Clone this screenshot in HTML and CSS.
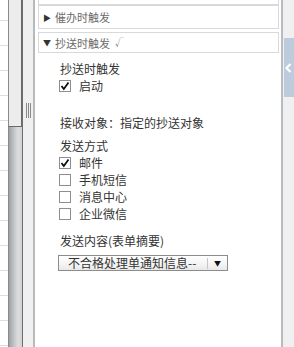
FILE: index.html
```html
<!DOCTYPE html>
<html>
<head>
<meta charset="utf-8">
<link rel="stylesheet" href="styles.css">
</head>
<body>
<div class="frame">
  <div class="list-strip"></div>
  <div class="vscroll">
    <div class="thumb"></div>
    <div class="track"></div>
  </div>
  <div class="splitter">
    <div class="grip"><span></span><span></span><span></span></div>
  </div>
  <div class="panel">
    <div class="sec sec-cut"></div>
    <div class="sec sec-b"><span class="tri">▶</span>催办时触发</div>
    <div class="sec sec-c"><span class="tri">▼</span>抄送时触发<span class="tick">√</span></div>
    <div class="content">
      <div class="row title">抄送时触发</div>
      <div class="row chk"><span class="box checked"><svg viewBox="0 0 12 12" width="12" height="12"><path d="M2.5 6 L4.8 9 L9.5 2.5" fill="none" stroke="#111" stroke-width="1.8"/></svg></span>启动</div>
      <div class="row recv">接收对象：指定的抄送对象</div>
      <div class="row title2">发送方式</div>
      <div class="row chk"><span class="box checked"><svg viewBox="0 0 12 12" width="12" height="12"><path d="M2.5 6 L4.8 9 L9.5 2.5" fill="none" stroke="#111" stroke-width="1.8"/></svg></span>邮件</div>
      <div class="row chk"><span class="box"></span>手机短信</div>
      <div class="row chk"><span class="box"></span>消息中心</div>
      <div class="row chk"><span class="box"></span>企业微信</div>
      <div class="row title3">发送内容(表单摘要)</div>
      <div class="select"><span class="sel-text">不合格处理单通知信息--</span><span class="sel-sep"></span><span class="sel-arrow">▼</span></div>
    </div>
  </div>
  <div class="rborder"></div>
  <div class="rstrip">
    <div class="tab"><svg viewBox="0 0 9 10" width="9" height="10"><path d="M6.5 1 L2.5 5 L6.5 9" fill="none" stroke="#fff" stroke-width="2.2"/></svg></div>
  </div>
</div>
</body>
</html>
```
FILE: styles.css
```css
html, body {
  margin: 0;
  padding: 0;
  background: #fff;
}
body {
  font-family: "Noto Sans CJK SC", "Noto Sans", sans-serif;
  color: #333;
  font-size: 12px;
}
.frame {
  display: flex;
  width: 294px;
  height: 347px;
  overflow: hidden;
}
.list-strip {
  width: 8px;
  flex: none;
  background: repeating-linear-gradient(to bottom, #fff 0 20px, #dedede 20px 21px, #fff 21px 25px);
}
.vscroll {
  width: 14px;
  flex: none;
  display: flex;
  flex-direction: column;
  border-right: 1px solid #6e6e6e;
}
.thumb {
  background: #ececec;
  border-left: 1px solid #8a8a8a;
  border-right: 1px solid #6a6a6a;
  border-bottom: 1px solid #6a6a6a;
  box-sizing: border-box;
  height: 127px;
}
.track {
  flex: 1;
  border-left: 1px solid #8a8a8a;
  background: linear-gradient(to right, #9ea2a4 0, #c4c7c9 40%, #dcdedf 70%, #cfd1d2 100%);
}
.splitter {
  width: 10px;
  flex: none;
  background: #f0f0f0;
  border-right: 2px solid #b6babd;
}
.grip {
  display: flex;
  gap: 1px;
  margin: 103px 0 0 3px;
}
.grip span {
  width: 1px;
  height: 15px;
  background: #8a8a8a;
}
.panel {
  width: 246px;
  flex: none;
  background: #fff;
  padding: 0 2px 0 3px;
  box-sizing: border-box;
}
.sec {
  border: 1px solid #d9d9d9;
  background: #fff;
  font-size: 11px;
  color: #6a6a6a;
  display: flex;
  align-items: center;
  padding-left: 4px;
  box-sizing: border-box;
}
.sec-cut {
  height: 5px;
  border-top: none;
}
.sec-b {
  height: 24px;
}
.sec-c {
  height: 21px;
  margin-top: 3px;
}
.tri {
  font-size: 8px;
  color: #333;
  width: 9px;
  margin-right: 3px;
}
.tick {
  font-size: 9px;
  color: #888;
  margin-left: 5px;
}
.content {
  padding-left: 22px;
  padding-top: 7px;
}
.row {
  height: 17px;
  line-height: 17px;
  white-space: nowrap;
  display: flex;
  align-items: center;
}
.chk {
  margin-left: -1px;
}
.box {
  width: 12px;
  height: 12px;
  box-sizing: border-box;
  border: 1px solid #8e8e8e;
  background: #fff;
  margin-right: 8px;
  display: flex;
  align-items: center;
  justify-content: center;
}
.box svg {
  flex: none;
}
.recv {
  margin-top: 20px;
}
.title2 {
  margin-top: 6px;
}
.title3 {
  margin-top: 10px;
}
.select {
  margin-top: 6px;
  margin-left: -2px;
  width: 170px;
  height: 16px;
  box-sizing: border-box;
  border: 1px solid #8c8c8c;
  background: linear-gradient(to bottom, #ffffff 0, #f4f4f4 60%, #e8e8e8 100%);
  display: flex;
  align-items: center;
  font-size: 12px;
  line-height: 14px;
}
.sel-text {
  margin-left: 9px;
  width: 139px;
  white-space: nowrap;
}
.sel-sep {
  width: 1px;
  height: 11px;
  background: #c6c6c6;
}
.sel-arrow {
  font-size: 7px;
  margin-left: 6px;
  color: #111;
}
.rborder {
  width: 2px;
  flex: none;
  background: #b8bcc0;
}
.rstrip {
  flex: 1;
  background: #f0f0f0;
  padding-top: 38px;
  padding-left: 1px;
}
.tab {
  height: 59px;
  background: #bdccdd;
  display: flex;
  align-items: center;
}
```
